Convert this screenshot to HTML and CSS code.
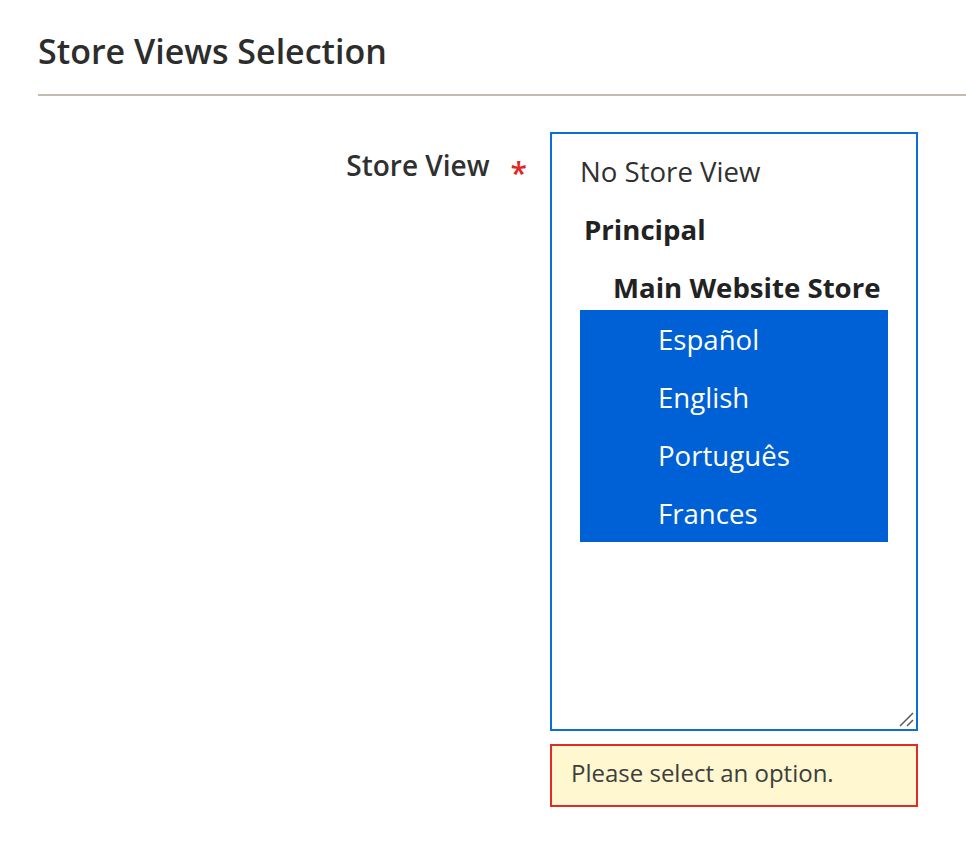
FILE: index.html
```html
<!DOCTYPE html>
<html>
<head>
	<title>Store Views Selection</title>
	<meta charset="UTF-8">
	<meta name="viewport" content="width=device-width, initial-scale=1.0">
	<link rel="stylesheet" href="styles.css">
</head>
<body>
	<fieldset class="fieldset">
		<legend class="fieldset-legend">Store Views Selection</legend>
		<div class="field">
			<label class="field-label" for="store-view"><span>Store View</span></label>
			<div class="field-control">
				<div class="listbox" id="store-view" role="listbox" aria-multiselectable="true">
					<div class="option">No Store View</div>
					<div class="group-label">Principal</div>
					<div class="group-label sub">Main Website Store</div>
					<div class="option child selected">Español</div>
					<div class="option child selected">English</div>
					<div class="option child selected">Português</div>
					<div class="option child selected">Frances</div>
					<!-- resize grip -->
					<svg class="grip" width="16" height="16" viewBox="0 0 16 16">
						<path d="M2 15 L15 2 M9 15 L15 9" stroke="#5a5a5a" stroke-width="1.5" fill="none"/>
					</svg>
				</div>
				<div class="field-error">Please select an option.</div>
			</div>
		</div>
	</fieldset>
</body>
</html>
```

FILE: styles.css
```css
body {
	margin: 0;
	font-family: "Open Sans", "Liberation Sans", sans-serif;
	color: #303030;
	background-color: #fff;
}
.fieldset {
	border: none;
	margin: 0;
	padding: 30px 0 0 38px;
	min-width: 0;
}
.fieldset-legend {
	float: left;
	width: 100%;
	padding: 0 0 22px;
	border-bottom: 2px solid #c4bcb0;
	font-size: 34px;
	font-weight: 600;
	line-height: 42px;
	color: #2d2d2d;
}
.field {
	clear: both;
	display: grid;
	grid-template-columns: 512px 368px;
	padding-top: 36px;
}
.field-label {
	text-align: right;
	padding: 4px 23px 0 0;
	font-size: 28px;
	font-weight: 600;
	line-height: 58px;
	color: #303030;
}
.field-label span::after {
	content: "*";
	color: #e22626;
	font-size: 30px;
	margin-left: 21px;
	vertical-align: -8px;
}
.listbox {
	position: relative;
	box-sizing: border-box;
	height: 599px;
	border: 2px solid #0a6fd8;
	padding: 8px 28px 0 28px;
	font-size: 27.6px;
	line-height: 58px;
}
.option {
	white-space: nowrap;
	color: #303030;
}
.group-label {
	white-space: nowrap;
	font-weight: 700;
	padding-left: 4px;
	color: #222;
}
.group-label.sub {
	padding-left: 33px;
	height: 52px;
}
.option.child {
	padding-left: 78px;
}
.option.selected {
	background-color: #0060d5;
	color: #fff;
}
.grip {
	position: absolute;
	right: 2px;
	bottom: 2px;
}
.field-error {
	margin-top: 13px;
	border: 2px solid #e02b27;
	background-color: #fff7cf;
	padding: 0 0 6px 19px;
	font-size: 24px;
	line-height: 53px;
	color: #3d3d3d;
}
```
